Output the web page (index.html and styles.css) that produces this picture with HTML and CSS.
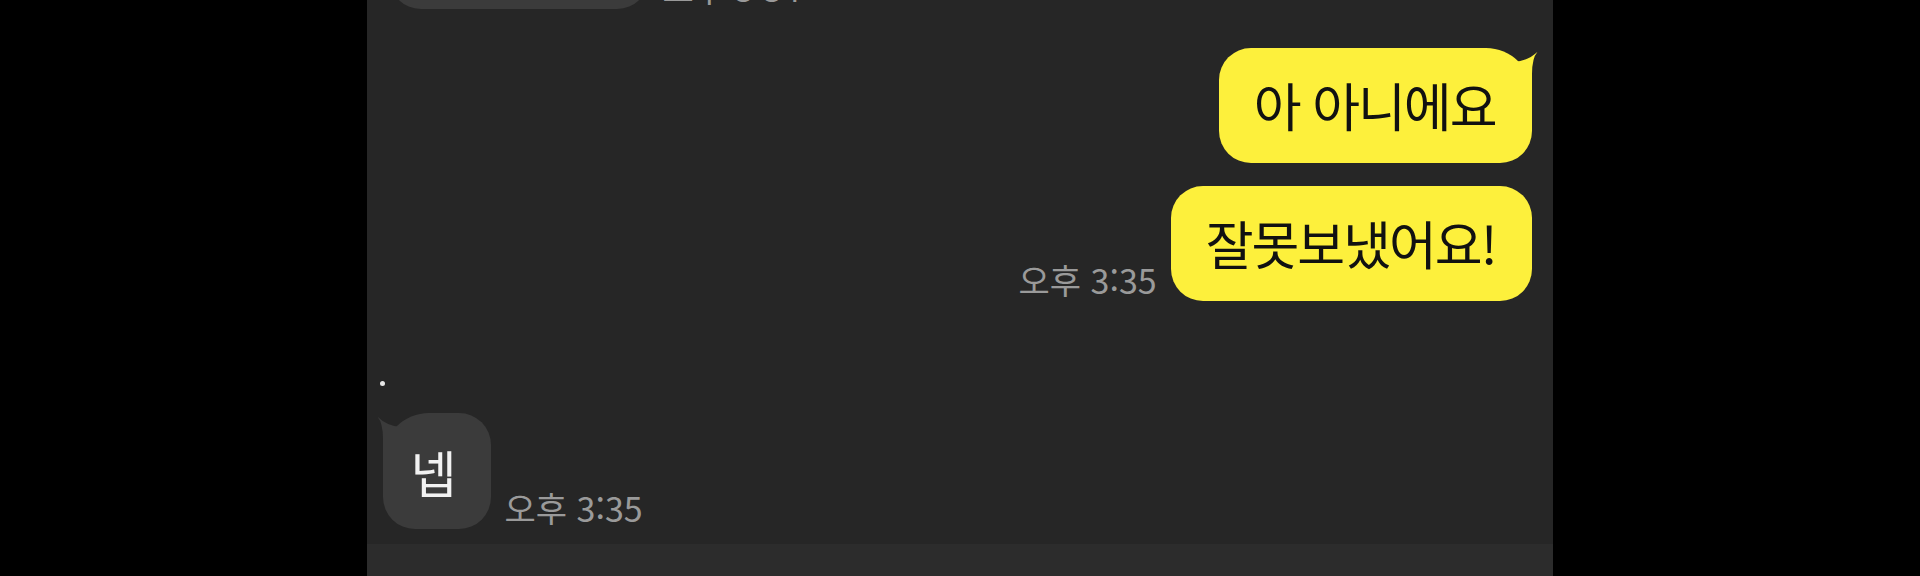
FILE: index.html
```html
<!DOCTYPE html>
<html lang="ko">
<head>
<meta charset="utf-8">
<title>채팅</title>
<link rel="stylesheet" href="styles.css">
</head>
<body>
<div class="screen">
  <div class="chat">
    <div class="messages">
      <div class="row in prev">
        <div class="bubble grey prev-bubble"></div>
        <span class="time">오후 3:34</span>
      </div>
      <div class="row out first">
        <div class="bubble yellow tailed-right">아 아니에요<svg class="tail tail-right" viewBox="-18 0 26 46" width="26" height="46"><path d="M-18 14 Q-4 13 5.5 3.7 Q0 10 0 26 V46 H-18 Z"/></svg></div>
      </div>
      <div class="row out second">
        <span class="time">오후 3:35</span>
        <div class="bubble yellow">잘못보냈어요!</div>
      </div>
      <div class="dot"></div>
      <div class="row in last">
        <div class="bubble grey tailed-left short">넵<svg class="tail tail-left" viewBox="-8 0 26 46" width="26" height="46"><path d="M18 14 Q4 13 -5.5 3.7 Q0 10 0 26 V46 H18 Z"/></svg></div>
        <span class="time">오후 3:35</span>
      </div>
    </div>
    <div class="composer"></div>
  </div>
</div>
</body>
</html>
```
FILE: styles.css
```css
html, body {
  margin: 0;
  padding: 0;
  background: #000;
}
body {
  font-family: "Noto Sans CJK KR", "Noto Sans", sans-serif;
}
.screen {
  display: flex;
  justify-content: center;
  width: 1920px;
  height: 576px;
  overflow: hidden;
}
.chat {
  width: 1186px;
  height: 576px;
  margin-left: -1px;
  background: #262626;
  display: flex;
  flex-direction: column;
}
.messages {
  flex: 1;
  overflow: hidden;
  display: flex;
  flex-direction: column;
  padding: 0 21px 0 16px;
}
.row {
  display: flex;
  align-items: flex-end;
  gap: 14px;
}
.row.out { justify-content: flex-end; }
.row.prev { margin-top: -107px; }
.row.first { margin-top: 39px; }
.row.second { margin-top: 23px; }
.row.last { margin-top: 27px; }

.bubble {
  position: relative;
  font-size: 52px;
  line-height: 60px;
  letter-spacing: -2px;
  padding: 27px 36px 28px 35px;
  border-radius: 32px;
  white-space: nowrap;
}
.yellow {
  background: #fdf03c;
  color: #111;
}
.grey {
  background: #3b3b3b;
  color: #f2f2f2;
}
.prev-bubble {
  width: 260px;
  height: 116px;
  padding: 0;
  margin-left: 6px;
  box-sizing: border-box;
}
.short {
  font-size: 50px;
  letter-spacing: 0;
  padding: 28px 34px 28px 28px;
}
.tailed-right { border-top-right-radius: 46px; }
.tailed-left { border-top-left-radius: 46px; }
.tail {
  position: absolute;
  top: 0;
}
.tail-right { right: -8px; fill: #fdf03c; }
.tail-left { left: -8px; fill: #3b3b3b; }

.time {
  font-size: 34px;
  line-height: 38px;
  color: #9a9a9a;
  margin-bottom: 2px;
}
.dot {
  width: 5px;
  height: 5px;
  border-radius: 50%;
  background: #e6e6e6;
  margin-top: 80px;
  margin-left: -3px;
}
.composer {
  height: 32px;
  background: #2c2c2c;
}
```
